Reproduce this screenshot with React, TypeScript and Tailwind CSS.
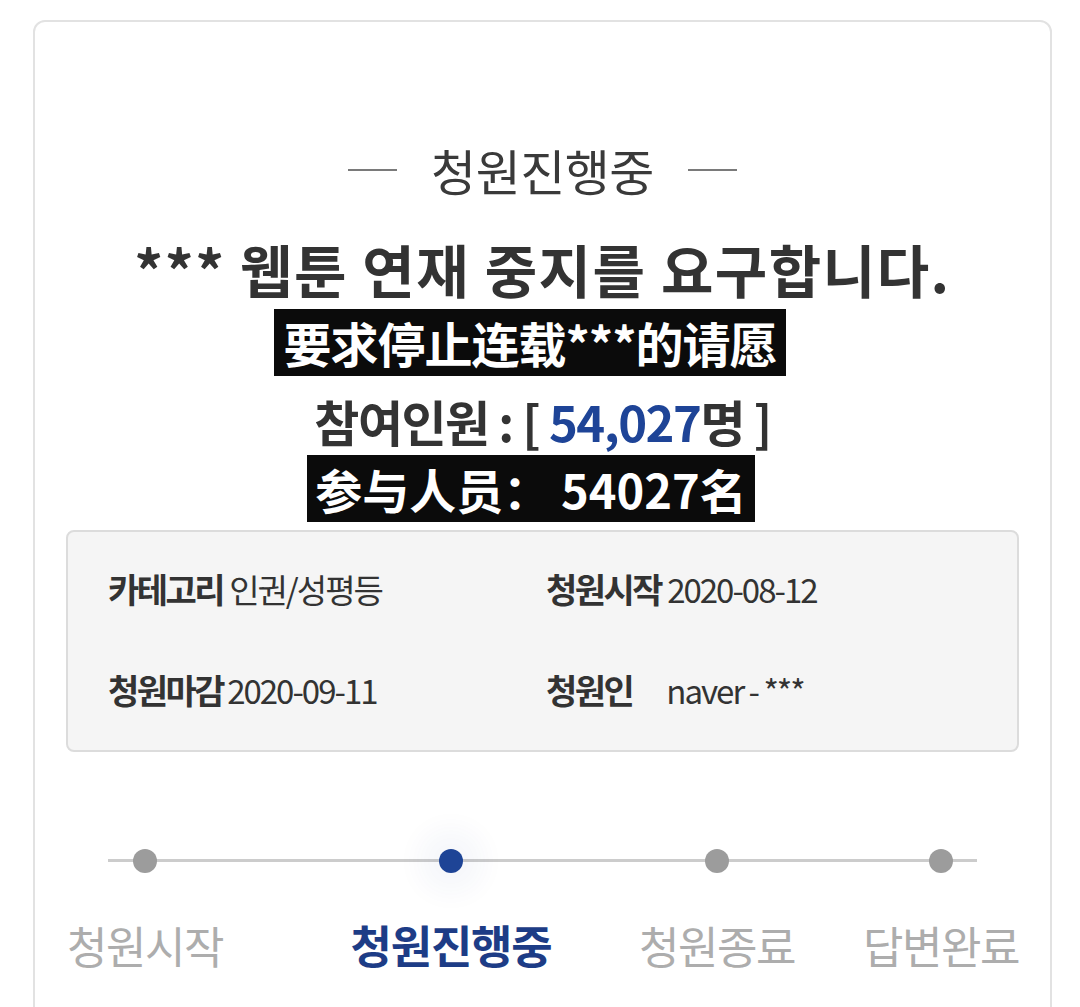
import React from "react";

const KR = { fontFamily: '"Noto Sans CJK KR", "Noto Sans", sans-serif' };
const SC = { fontFamily: '"Noto Sans CJK SC", "Noto Sans", sans-serif' };

function InfoItem({ label, value, gap }: { label: string; value: string; gap?: string }) {
  return (
    <div className="flex items-center leading-[40px] text-[#333]">
      <span className="font-bold text-[34px] tracking-[-2.5px]">{label}</span>
      <span className={`font-normal text-[33px] tracking-[-2px] ${gap ?? "ml-[6px]"}`}>{value}</span>
    </div>
  );
}

function Step({ label, active, className }: { label: string; active?: boolean; className: string }) {
  return (
    <div className={`flex flex-col items-center ${className}`}>
      <div className="h-[24px] flex items-center justify-center">
        {active ? (
          <div className="w-[24px] h-[24px] rounded-full bg-[#1e4496] shadow-[0_0_24px_22px_rgba(30,68,150,0.035)]" />
        ) : (
          <div className="w-[24px] h-[24px] rounded-full bg-[#9c9c9c]" />
        )}
      </div>
      <div
        className={`mt-[47px] leading-[50px] whitespace-nowrap ${
          active ? "font-bold text-[45px] tracking-[-1.2px] text-[#1d3c86]" : "font-normal text-[44px] tracking-[-1.5px] text-[#adadad]"
        }`}
      >
        {label}
      </div>
    </div>
  );
}

export default function App() {
  return (
    <div className="w-[1080px] h-[1007px] overflow-hidden bg-white pl-[33px] pt-[20px]" style={KR}>
      <div className="w-[1019px] h-[1100px] border-2 border-[#e2e2e2] rounded-[12px] bg-white flex flex-col items-center pt-[120px]">
        <div className="flex items-center">
          <div className="w-[49px] h-[2px] bg-[#7a7a7a]" />
          <div className="mx-[34px] text-[49px] leading-[56px] text-[#3a3a3a] tracking-[-0.5px]">청원진행중</div>
          <div className="w-[49px] h-[2px] bg-[#7a7a7a]" />
        </div>
        <div className="mt-[38px] text-[57px] leading-[64px] font-bold text-[#333] tracking-[1.5px] whitespace-nowrap">
          *** 웹툰 연재 중지를 요구합니다.
        </div>
        <div
          className="mt-[9px] mr-[25px] w-[512px] h-[67px] bg-[#0b0b0b] flex items-center justify-center text-white font-bold text-[48px] leading-[67px] tracking-[-1px] whitespace-nowrap"
          style={SC}
        >
          要求停止连载***的请愿
        </div>
        <div className="mt-[17px] text-[49px] leading-[56px] font-bold text-[#333] tracking-[-1.5px] whitespace-nowrap">
          참여인원 : [ <span className="text-[#1e4497]">54,027</span>명 ]
        </div>
        <div
          className="mt-[6px] mr-[23px] w-[448px] h-[67px] bg-[#0b0b0b] flex items-center justify-center text-white font-bold text-[47px] leading-[67px] whitespace-nowrap"
          style={SC}
        >
          参与人员： 54027名
        </div>
        <div className="mt-[8px] w-[953px] h-[222px] bg-[#f5f5f5] border-2 border-[#dcdcdc] rounded-[8px] pl-[40px] pt-[37px]">
          <div className="flex">
            <div className="w-[438px]">
              <InfoItem label="카테고리" value="인권/성평등" />
            </div>
            <InfoItem label="청원시작" value="2020-08-12" />
          </div>
          <div className="flex mt-[61px]">
            <div className="w-[438px]">
              <InfoItem label="청원마감" value="2020-09-11" gap="ml-[4px]" />
            </div>
            <InfoItem label="청원인" value="naver - ***" gap="ml-[34px]" />
          </div>
        </div>
        <div className="self-start ml-[32px] mt-[97px] relative w-[952px]">
          <div className="absolute left-[41px] top-[10px] w-[869px] h-[3px] bg-[#cccccc]" />
          <div className="relative flex">
            <Step label="청원시작" className="w-[156px]" />
            <Step label="청원진행중" active className="w-[196px] ml-[130px]" />
            <Step label="청원종료" className="w-[156px] ml-[90px]" />
            <Step label="답변완료" className="w-[156px] ml-[68px]" />
          </div>
        </div>
      </div>
    </div>
  );
}
